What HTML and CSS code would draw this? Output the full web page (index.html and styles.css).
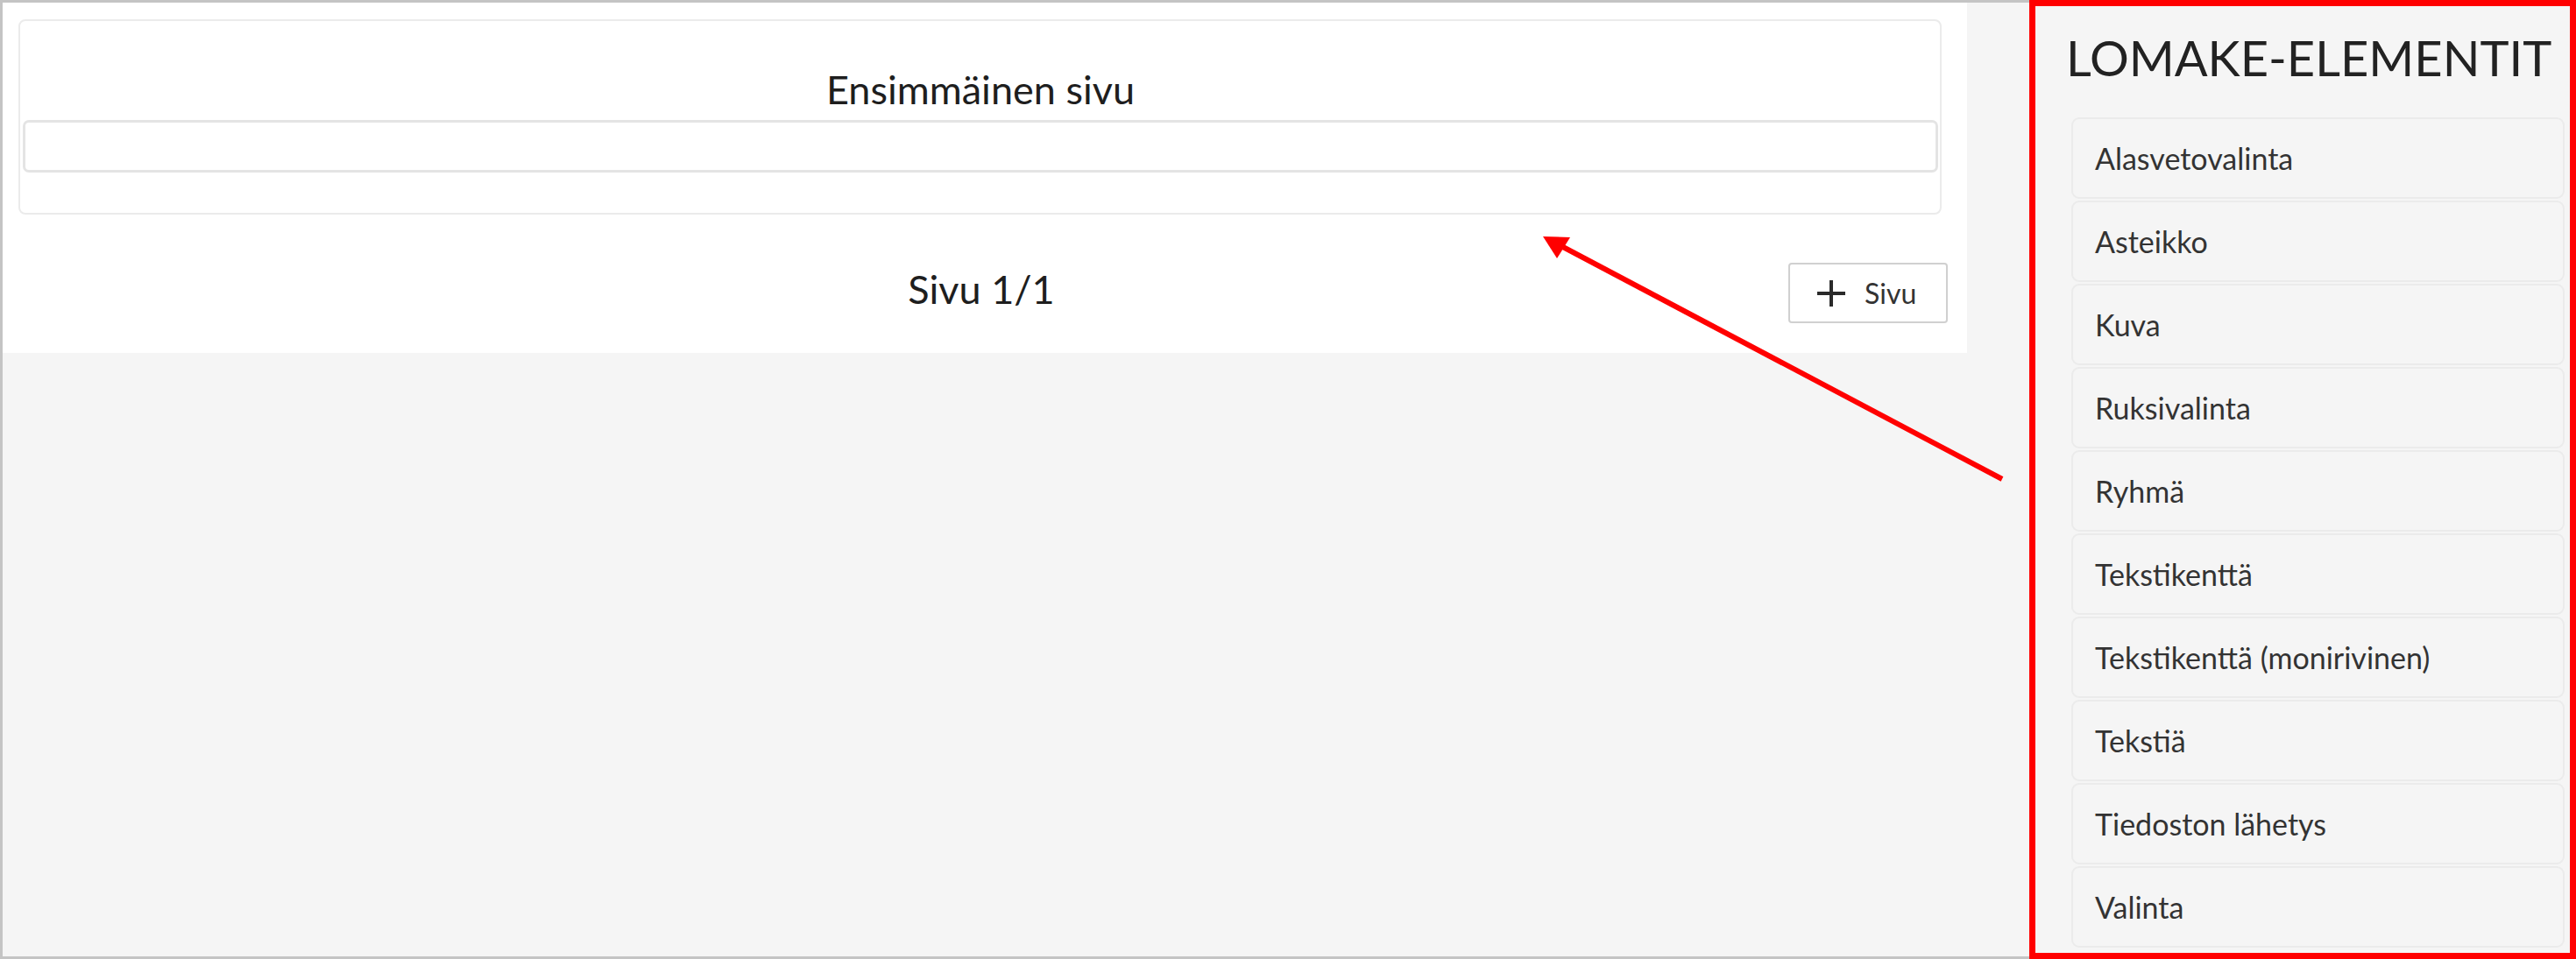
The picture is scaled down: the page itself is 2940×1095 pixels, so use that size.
FILE: index.html
```html
<!DOCTYPE html>
<html lang="fi">
<head>
<meta charset="utf-8">
<title>Lomake-editori</title>
<link rel="stylesheet" href="styles.css">
</head>
<body>
<div class="screen">
  <div class="workspace">
    <div class="panel">
      <div class="page-card">
        <div class="page-title">Ensimmäinen sivu</div>
        <div class="drop-zone"></div>
      </div>
      <div class="pager">
        <span class="spacer"></span>
        <span class="page-count">Sivu 1/1</span>
        <button class="add-page" type="button">
          <svg class="plus" viewBox="0 0 34 32" width="34" height="32" aria-hidden="true">
            <path d="M17 1 V31 M1 16 H33" stroke="#2a2a2a" stroke-width="4" fill="none"/>
          </svg>
          <span>Sivu</span>
        </button>
      </div>
    </div>
  </div>
  <aside class="sidebar">
    <h2 class="sidebar-title">LOMAKE-ELEMENTIT</h2>
    <ul class="elements">
      <li class="element">Alasvetovalinta</li>
      <li class="element">Asteikko</li>
      <li class="element">Kuva</li>
      <li class="element">Ruksivalinta</li>
      <li class="element">Ryhmä</li>
      <li class="element">Tekstikenttä</li>
      <li class="element">Tekstikenttä (monirivinen)</li>
      <li class="element">Tekstiä</li>
      <li class="element">Tiedoston lähetys</li>
      <li class="element">Valinta</li>
    </ul>
  </aside>
  <svg class="annotation" viewBox="0 0 2940 1095" width="2940" height="1095" aria-hidden="true">
    <line x1="2285" y1="547" x2="1782" y2="281" stroke="#ff0000" stroke-width="6"/>
    <polygon points="1761,270 1792,271 1777,295" fill="#ff0000"/>
  </svg>
</div>
</body>
</html>
```

FILE: styles.css
```css
html, body {
  margin: 0;
  padding: 0;
}

body {
  font-family: Lato, "Open Sans", "Liberation Sans", sans-serif;
  color: #222;
  background: #f5f5f5;
}

.screen {
  position: relative;
  display: flex;
  width: 2940px;
  height: 1095px;
  background: #f5f5f5;
  overflow: hidden;
}

.workspace {
  flex: 0 0 2316px;
  box-sizing: border-box;
  height: 1095px;
  border: 3px solid #c4c4c4;
  border-right: none;
}

.panel {
  box-sizing: border-box;
  width: 2242px;
  height: 400px;
  background: #ffffff;
  padding: 19px 0 0 18px;
}

.page-card {
  box-sizing: border-box;
  width: 2195px;
  height: 223px;
  border: 2px solid #ebebeb;
  border-radius: 8px;
  padding: 48px 2px 0 3px;
}

.page-title {
  font-size: 45px;
  line-height: 60px;
  text-align: center;
  color: #1e1e1e;
  margin-bottom: 5px;
}

.drop-zone {
  box-sizing: border-box;
  height: 60px;
  border: 3px solid #e4e4e4;
  border-radius: 7px;
  background: #fff;
}

.pager {
  display: grid;
  grid-template-columns: 1fr auto 1fr;
  align-items: center;
  width: 2206px;
  height: 69px;
  margin: 55px 0 0 -4px;
}

.page-count {
  align-self: start;
  font-size: 45px;
  line-height: 60px;
  color: #1e1e1e;
}

.add-page {
  justify-self: end;
  box-sizing: border-box;
  width: 182px;
  height: 69px;
  display: flex;
  align-items: center;
  gap: 21px;
  padding: 0 0 0 30px;
  margin: 0;
  background: #ffffff;
  border: 2px solid #d0d0d0;
  border-radius: 4px;
  font-family: Lato, "Open Sans", "Liberation Sans", sans-serif;
  font-size: 32px;
  line-height: 40px;
  color: #333;
}

.plus {
  display: block;
  flex: 0 0 auto;
}

.sidebar {
  flex: 1 1 auto;
  box-sizing: border-box;
  height: 1095px;
  border: 7px solid #ff0000;
  background: #f5f5f5;
  padding: 24px 6px 0 0;
}

.sidebar-title {
  margin: 0 0 33px 0;
  padding-left: 35px;
  font-size: 56px;
  line-height: 70px;
  font-weight: 400;
  color: #222;
  white-space: nowrap;
}

.elements {
  list-style: none;
  margin: 0 0 0 41px;
  padding: 0;
  display: flex;
  flex-direction: column;
  gap: 2px;
}

.element {
  box-sizing: border-box;
  height: 93px;
  display: flex;
  align-items: center;
  padding-left: 25px;
  border: 2px solid #ebebeb;
  border-radius: 9px;
  background: #f5f5f5;
  font-size: 34px;
  color: #333;
  white-space: nowrap;
}

.annotation {
  position: absolute;
  left: 0;
  top: 0;
  pointer-events: none;
}
```
